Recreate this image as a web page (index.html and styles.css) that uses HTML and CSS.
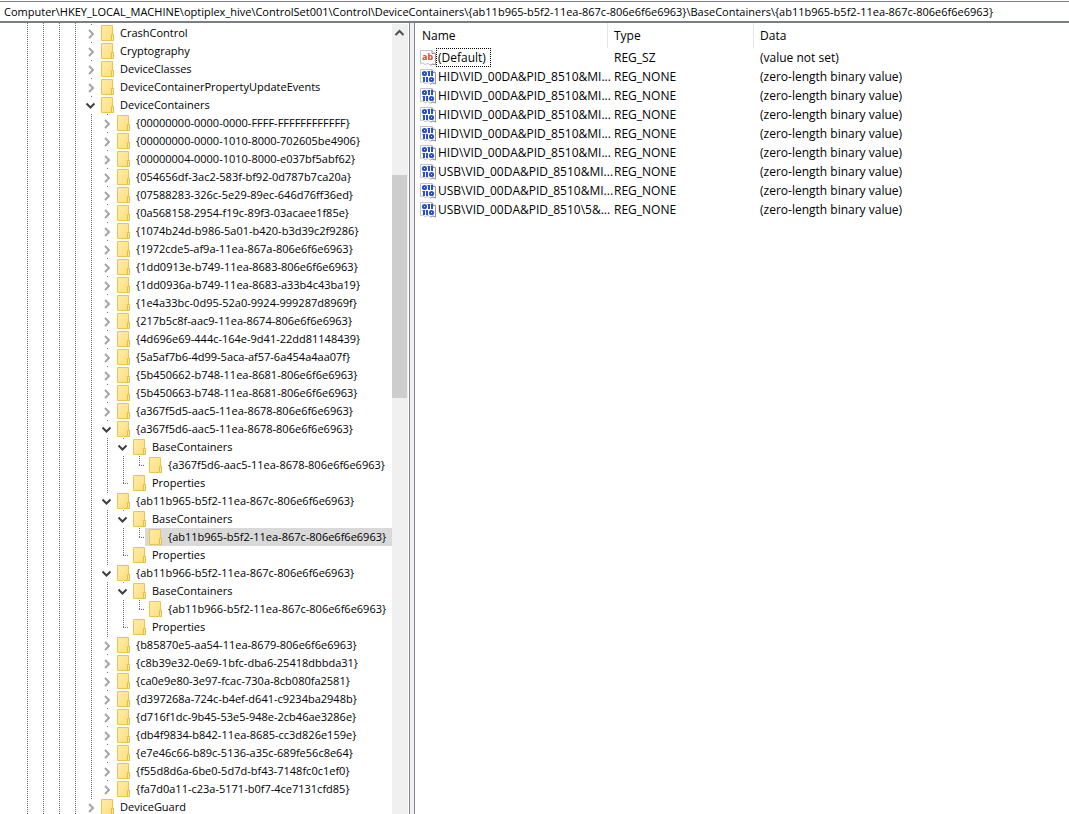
FILE: index.html
```html
<!DOCTYPE html>
<html lang="en">
<head>
<meta charset="utf-8">
<title>Registry Editor</title>
<link rel="stylesheet" href="styles.css">
</head>
<body>
<svg class="sprite" aria-hidden="true">
  <defs>
    <linearGradient id="paper" x1="0" y1="0" x2="1" y2="1">
      <stop offset="0" stop-color="#ffebab"/>
      <stop offset="1" stop-color="#ffdf7c"/>
    </linearGradient>
  </defs>
  <symbol id="folder" viewBox="0 0 13 16">
    <path d="M.5 .5H11.5V15.500H.5Z" fill="url(#paper)" stroke="#eac64f"/>
    <path d="M10.500 9.500H12.500V15.500H10.500Z" fill="#ffe89d" stroke="#e6bd3c"/>
  </symbol>
  <symbol id="closed" viewBox="0 0 13 12">
    <path d="M5 3L9 7L5 11" fill="none" stroke="#a6a6a6" stroke-width="2"/>
  </symbol>
  <symbol id="open" viewBox="0 0 13 12">
    <path d="M2.500 4.500L6.500 8.500L10.500 4.500" fill="none" stroke="#404040" stroke-width="2"/>
  </symbol>
  <symbol id="sheet" viewBox="0 0 16 16">
    <path d="M.5 .5H12L15.500 4V15L13 14L10.500 15L8 13.500L5 14.500L3 13L.5 13.500Z" fill="#fff" stroke="#c4c4c4"/>
    <path d="M12 .5V3.500H15.500V15L13 14L10.500 15" fill="none" stroke="#969696"/>
  </symbol>
  <symbol id="string" viewBox="0 0 16 16">
    <use href="#sheet"/>
    <text class="glyph" x="2" y="10">ab</text>
  </symbol>
  <symbol id="binary" viewBox="0 0 16 16">
    <use href="#sheet"/>
    <g fill="none" stroke="#2a4fd0" stroke-width="2">
      <circle cx="4.500" cy="4.500" r="1.600"/>
      <path d="M9 2V7M12 2V7M4 8V13M7 8V13"/>
      <path d="M7.500 2.500H9M10.800 2.500H12M2.500 8.500H4M5.800 8.500H7" stroke-width="1"/>
      <circle cx="11.500" cy="10.500" r="1.600"/>
    </g>
  </symbol>
</svg>

<input class="address" type="text" aria-label="Registry path" value="Computer\HKEY_LOCAL_MACHINE\optiplex_hive\ControlSet001\Control\DeviceContainers\{ab11b965-b5f2-11ea-867c-806e6f6e6963}\BaseContainers\{ab11b965-b5f2-11ea-867c-806e6f6e6963}">

<main class="panes">
  <nav class="tree-pane" aria-label="Registry keys">
    <div class="ancestors"><span></span><span></span><span></span><span></span></div>
    <ul class="tree" id="tree"></ul>
    <div class="scrollbar">
      <button class="scroll-up" aria-label="Scroll up">
        <svg width="11" height="8" viewBox="0 0 11 8"><path d="M1.500 6L5.500 2L9.500 6" fill="none" stroke="#505050" stroke-width="2"/></svg>
      </button>
      <div class="thumb"></div>
    </div>
  </nav>
  <section class="values-pane">
    <table class="values">
      <colgroup><col class="col-name"><col class="col-type"><col></colgroup>
      <thead><tr><th>Name</th><th>Type</th><th>Data</th></tr></thead>
      <tbody id="values"></tbody>
    </table>
  </section>
</main>
<script src="registry.js"></script>
</body>
</html>
```
FILE: styles.css
```css
* { box-sizing: border-box; }

body {
  margin: 0;
  height: 100vh;
  display: flex;
  flex-direction: column;
  overflow: hidden;
  background: #fff;
  color: #000;
  font: 11px/18px "Open Sans", sans-serif;
}

button { border: 0; padding: 0; background: none; }

.sprite { position: absolute; width: 0; height: 0; }

.glyph { font: bold 9px "Open Sans", sans-serif; fill: #d9481f; }

.address {
  width: 100%;
  height: 22px;
  flex: none;
  margin-top: 1px;
  padding: 0 4px;
  border: solid #7a7f85;
  border-width: 1px 0 2px;
  border-radius: 0;
  background: #fff;
  color: #000;
  font: inherit;
  outline: 0;
}

.panes { flex: 1; min-height: 0; display: flex; background: #f0f0f0; }

.tree-pane {
  width: 410px;
  flex: none;
  display: flex;
  overflow: hidden;
  background: #fff;
  border-right: 1px solid #828790;
}

.ancestors { display: flex; width: 84px; flex: none; padding-left: 27px; }

.ancestors span, .tree li {
  background: repeating-linear-gradient(#707070 0 1px, transparent 1px 2px) 0 0 / 1px 100% no-repeat;
}
.ancestors span { width: 16px; flex: none; }

.tree, .tree ul { list-style: none; margin: 0; padding: 0; }
.tree { flex: 1; min-width: 0; padding-top: 1px; }
.tree ul { padding-left: 16px; }
.tree li { background-position: 7px 0; }
.tree ul > li:last-child { background-size: 1px 10px; }

.row { display: flex; align-items: center; height: 18px; }

.twisty { width: 13px; flex: none; height: 16px; display: flex; align-items: center; background: #fff; }
.twisty svg { width: 13px; height: 12px; }

/* Keys without children get the dotted elbow instead of an arrow. */
.elbow {
  width: 13px;
  flex: none;
  height: 1px;
  background: repeating-linear-gradient(90deg, #707070 0 1px, transparent 1px 2px) 7px 0 / 6px 1px no-repeat;
}

.item {
  flex: 1;
  min-width: 0;
  display: flex;
  align-items: center;
  gap: 6px;
  height: 18px;
  padding-left: 4px;
  white-space: nowrap;
}
.item svg { width: 13px; height: 16px; flex: none; }
.selected { background: #d9d9d9; }

.scrollbar { width: 17px; flex: none; margin-top: 1px; background: #f0f0f0; border-right: 1px solid #fff; }
.scroll-up { display: flex; width: 15px; height: 17px; align-items: center; justify-content: center; }
.thumb { width: 15px; height: 223px; margin-top: 134px; background: #cdcdcd; }

.values-pane { flex: 1; min-width: 0; margin-left: 4px; background: #fff; border-left: 1px solid #828790; }

.values { width: 100%; table-layout: fixed; border-collapse: separate; border-spacing: 0; font-size: 12px; }
.col-name { width: 193px; }
.col-type { width: 146px; }
.values th { height: 25px; padding: 0 6px; font-weight: 400; text-align: left; border-right: 1px solid #e5e5e5; }
.values th:first-child { padding-left: 7px; }
.values th:last-child { border-right: 0; }
.values td { height: 19px; padding: 0 6px; white-space: nowrap; }
.values td:first-child { padding: 0 0 0 5px; }

.name { display: flex; align-items: center; height: 19px; }
.name svg { width: 16px; height: 16px; flex: none; }
.name span { padding: 0 2px; }
.name .focused { height: 19px; padding: 0 4px 0 1px; border: 1px dotted #000; }
```
FILE: registry.js
```js
const guid = (name, children) => ({ name, children: children || [] });
const container = name => guid(name, [
  { name: "BaseContainers", children: [{ name, leaf: true, selected: name.startsWith("{ab11b965") }] },
  { name: "Properties", leaf: true }
]);

const keys = [
  guid("CrashControl"), guid("Cryptography"), guid("DeviceClasses"), guid("DeviceContainerPropertyUpdateEvents"),
  guid("DeviceContainers", [
    ...[
      "{00000000-0000-0000-FFFF-FFFFFFFFFFFF}", "{00000000-0000-1010-8000-702605be4906}",
      "{00000004-0000-1010-8000-e037bf5abf62}", "{054656df-3ac2-583f-bf92-0d787b7ca20a}",
      "{07588283-326c-5e29-89ec-646d76ff36ed}", "{0a568158-2954-f19c-89f3-03acaee1f85e}",
      "{1074b24d-b986-5a01-b420-b3d39c2f9286}", "{1972cde5-af9a-11ea-867a-806e6f6e6963}",
      "{1dd0913e-b749-11ea-8683-806e6f6e6963}", "{1dd0936a-b749-11ea-8683-a33b4c43ba19}",
      "{1e4a33bc-0d95-52a0-9924-999287d8969f}", "{217b5c8f-aac9-11ea-8674-806e6f6e6963}",
      "{4d696e69-444c-164e-9d41-22dd81148439}", "{5a5af7b6-4d99-5aca-af57-6a454a4aa07f}",
      "{5b450662-b748-11ea-8681-806e6f6e6963}", "{5b450663-b748-11ea-8681-806e6f6e6963}",
      "{a367f5d5-aac5-11ea-8678-806e6f6e6963}"
    ].map(n => guid(n)),
    container("{a367f5d6-aac5-11ea-8678-806e6f6e6963}"),
    container("{ab11b965-b5f2-11ea-867c-806e6f6e6963}"),
    container("{ab11b966-b5f2-11ea-867c-806e6f6e6963}"),
    ...[
      "{b85870e5-aa54-11ea-8679-806e6f6e6963}", "{c8b39e32-0e69-1bfc-dba6-25418dbbda31}",
      "{ca0e9e80-3e97-fcac-730a-8cb080fa2581}", "{d397268a-724c-b4ef-d641-c9234ba2948b}",
      "{d716f1dc-9b45-53e5-948e-2cb46ae3286e}", "{db4f9834-b842-11ea-8685-cc3d826e159e}",
      "{e7e46c66-b89c-5136-a35c-689fe56c8e64}", "{f55d8d6a-6be0-5d7d-bf43-7148fc0c1ef0}",
      "{fa7d0a11-c23a-5171-b0f7-4ce7131cfd85}"
    ].map(n => guid(n))
  ]),
  guid("DeviceGuard")
];

const icon = id => `<svg aria-hidden="true"><use href="#${id}"/></svg>`;

function renderKey(key) {
  const expanded = key.children && key.children.length > 0;
  const lead = key.leaf
    ? '<span class="elbow"></span>'
    : `<button class="twisty" aria-label="${expanded ? "Collapse" : "Expand"} ${key.name}">${icon(expanded ? "open" : "closed")}</button>`;
  return `<li><div class="row">${lead}<div class="item${key.selected ? " selected" : ""}">${icon("folder")}<span>${key.name}</span></div></div>` +
    (expanded ? `<ul>${key.children.map(renderKey).join("")}</ul>` : "") + "</li>";
}

document.getElementById("tree").innerHTML = keys.map(renderKey).join("");

const hid = "HID\\VID_00DA&amp;PID_8510&amp;MI...";
const usb = "USB\\VID_00DA&amp;PID_8510&amp;MI...";
const names = [hid, hid, hid, hid, hid, usb, usb, "USB\\VID_00DA&amp;PID_8510\\5&amp;..."];

document.getElementById("values").innerHTML =
  `<tr><td><div class="name">${icon("string")}<span class="focused">(Default)</span></div></td><td>REG_SZ</td><td>(value not set)</td></tr>` +
  names.map(n => `<tr><td><div class="name">${icon("binary")}<span>${n}</span></div></td><td>REG_NONE</td><td>(zero-length binary value)</td></tr>`).join("");
```
